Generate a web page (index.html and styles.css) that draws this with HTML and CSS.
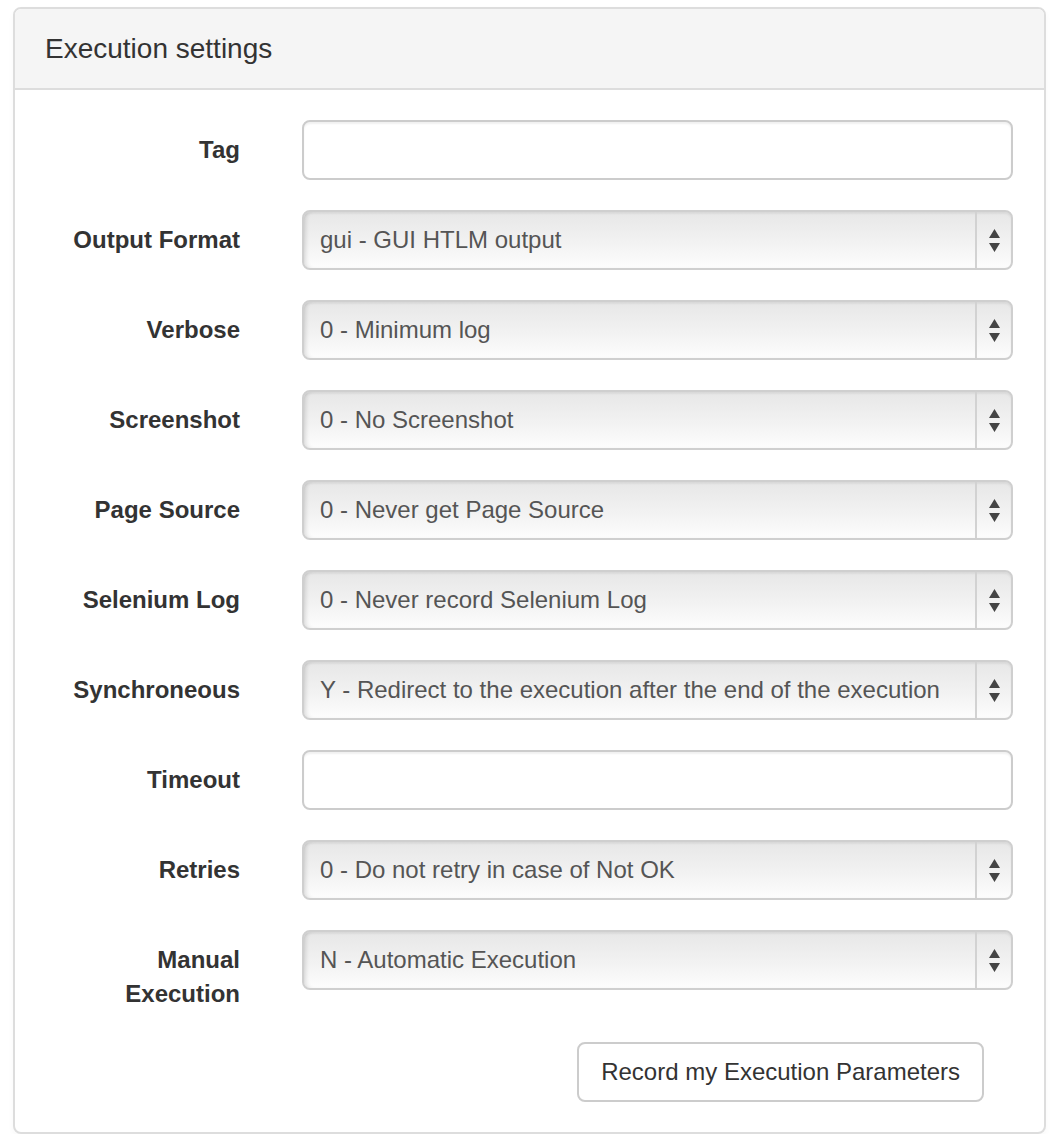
FILE: index.html
```html
<!DOCTYPE html>
<html>
<head>
<meta charset="utf-8">
<link rel="stylesheet" href="styles.css">
</head>
<body>
<div class="panel">
  <div class="panel-heading">Execution settings</div>
  <div class="panel-body">
    <div class="form-row">
      <label class="label">Tag</label>
      <div class="control"><input class="text-input" type="text"></div>
    </div>
    <div class="form-row">
      <label class="label">Output Format</label>
      <div class="control"><div class="select"><span class="value">gui - GUI HTLM output</span><span class="arrows"><svg width="11" height="23" viewBox="0 0 11 23"><path d="M5.5 0 L11 9 L0 9 Z M0 14 L11 14 L5.5 23 Z" fill="#444"/></svg></span></div></div>
    </div>
    <div class="form-row">
      <label class="label">Verbose</label>
      <div class="control"><div class="select"><span class="value">0 - Minimum log</span><span class="arrows"><svg width="11" height="23" viewBox="0 0 11 23"><path d="M5.5 0 L11 9 L0 9 Z M0 14 L11 14 L5.5 23 Z" fill="#444"/></svg></span></div></div>
    </div>
    <div class="form-row">
      <label class="label">Screenshot</label>
      <div class="control"><div class="select"><span class="value">0 - No Screenshot</span><span class="arrows"><svg width="11" height="23" viewBox="0 0 11 23"><path d="M5.5 0 L11 9 L0 9 Z M0 14 L11 14 L5.5 23 Z" fill="#444"/></svg></span></div></div>
    </div>
    <div class="form-row">
      <label class="label">Page Source</label>
      <div class="control"><div class="select"><span class="value">0 - Never get Page Source</span><span class="arrows"><svg width="11" height="23" viewBox="0 0 11 23"><path d="M5.5 0 L11 9 L0 9 Z M0 14 L11 14 L5.5 23 Z" fill="#444"/></svg></span></div></div>
    </div>
    <div class="form-row">
      <label class="label">Selenium Log</label>
      <div class="control"><div class="select"><span class="value">0 - Never record Selenium Log</span><span class="arrows"><svg width="11" height="23" viewBox="0 0 11 23"><path d="M5.5 0 L11 9 L0 9 Z M0 14 L11 14 L5.5 23 Z" fill="#444"/></svg></span></div></div>
    </div>
    <div class="form-row">
      <label class="label">Synchroneous</label>
      <div class="control"><div class="select"><span class="value">Y - Redirect to the execution after the end of the execution</span><span class="arrows"><svg width="11" height="23" viewBox="0 0 11 23"><path d="M5.5 0 L11 9 L0 9 Z M0 14 L11 14 L5.5 23 Z" fill="#444"/></svg></span></div></div>
    </div>
    <div class="form-row">
      <label class="label">Timeout</label>
      <div class="control"><input class="text-input" type="text"></div>
    </div>
    <div class="form-row">
      <label class="label">Retries</label>
      <div class="control"><div class="select"><span class="value">0 - Do not retry in case of Not OK</span><span class="arrows"><svg width="11" height="23" viewBox="0 0 11 23"><path d="M5.5 0 L11 9 L0 9 Z M0 14 L11 14 L5.5 23 Z" fill="#444"/></svg></span></div></div>
    </div>
    <div class="form-row">
      <label class="label">Manual<br>Execution</label>
      <div class="control"><div class="select"><span class="value">N - Automatic Execution</span><span class="arrows"><svg width="11" height="23" viewBox="0 0 11 23"><path d="M5.5 0 L11 9 L0 9 Z M0 14 L11 14 L5.5 23 Z" fill="#444"/></svg></span></div></div>
    </div>
    <div class="actions">
      <button class="btn" type="button">Record my Execution Parameters</button>
    </div>
  </div>
</div>
</body>
</html>
```
FILE: styles.css
```css
html, body {
  margin: 0;
  padding: 0;
  background: #ffffff;
}
body {
  font-family: "Liberation Sans", Arial, sans-serif;
  color: #333;
  padding: 7px 14px 0 13px;
}
.panel {
  border: 2px solid #dddddd;
  border-radius: 8px;
  background: #fff;
  box-shadow: 0 3px 6px rgba(0,0,0,0.03);
  overflow: hidden;
}
.panel-heading {
  background: #f5f5f5;
  border-bottom: 2px solid #dddddd;
  height: 81px;
  box-sizing: border-box;
  padding: 0 30px;
  font-size: 28px;
  line-height: 79px;
  color: #333;
}
.panel-body {
  padding: 30px 31px 30px 0;
  display: flex;
  flex-direction: column;
  gap: 30px;
}
.form-row {
  display: grid;
  grid-template-columns: 225px 1fr;
  column-gap: 62px;
  align-items: start;
}
.label {
  text-align: right;
  font-weight: bold;
  font-size: 24px;
  line-height: 34px;
  padding-top: 13px;
  color: #333;
}
.control {
  min-width: 0;
}
.text-input {
  display: block;
  width: 100%;
  height: 60px;
  box-sizing: border-box;
  border: 2px solid #cccccc;
  border-radius: 8px;
  background: #fff;
  box-shadow: inset 0 2px 2px rgba(0,0,0,0.06);
  margin: 0;
  padding: 0 16px;
  font: inherit;
}
.select {
  display: flex;
  height: 60px;
  box-sizing: border-box;
  border: 2px solid #cfcfcf;
  border-radius: 8px;
  background: linear-gradient(#e7e7e7, #f3f3f3 60%, #fdfdfd);
  box-shadow: inset 4px 0 4px -2px rgba(0,0,0,0.12), inset 0 2px 2px rgba(0,0,0,0.05);
  color: #555;
  font-size: 24px;
}
.value {
  flex: 1;
  padding-left: 16px;
  line-height: 56px;
  white-space: nowrap;
  overflow: hidden;
}
.arrows {
  width: 34px;
  border-left: 2px solid #d2d2d2;
  display: flex;
  align-items: center;
  justify-content: center;
}
.actions {
  display: flex;
  justify-content: flex-end;
  padding-right: 29px;
  margin-top: 1px;
}
.btn {
  height: 60px;
  box-sizing: border-box;
  padding: 0 22px;
  border: 2px solid #cccccc;
  border-radius: 8px;
  background: #fff;
  font-family: "Liberation Sans", Arial, sans-serif;
  font-size: 24px;
  color: #333;
}
```
